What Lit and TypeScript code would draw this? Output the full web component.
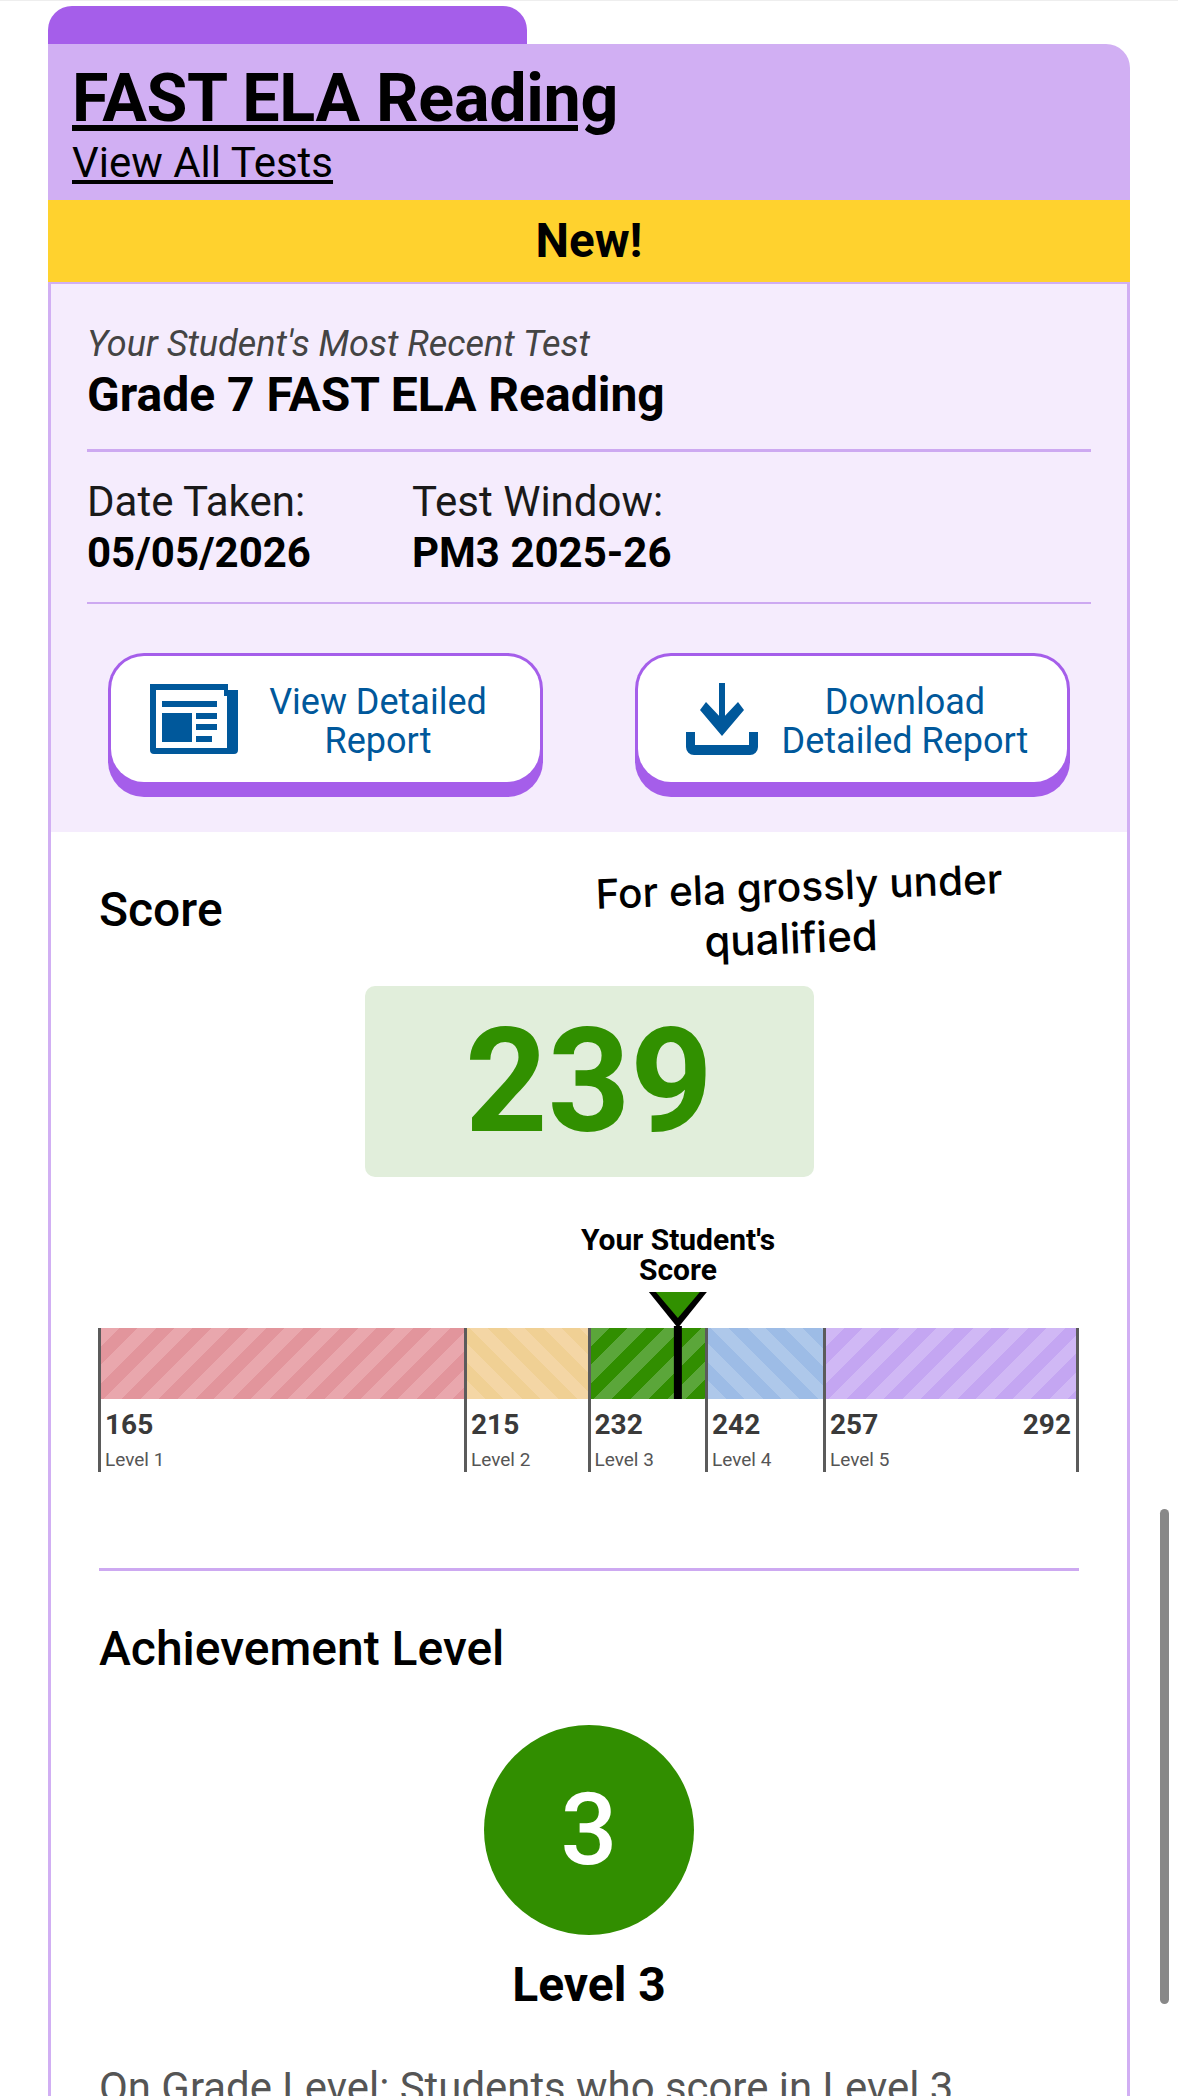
import { LitElement, html, css } from "lit";
import { customElement } from "lit/decorators.js";

const LEVELS = [
  { n: "165", l: "Level 1", w: 366, c: "red" },
  { n: "215", l: "Level 2", w: 123.5, c: "orange" },
  { n: "232", l: "Level 3", w: 117.5, c: "green" },
  { n: "242", l: "Level 4", w: 118, c: "blue" },
  { n: "257", l: "Level 5", w: 256, c: "purple" },
];

@customElement("app-root")
export class AppRoot extends LitElement {
  static styles = css`
    :host { display: block; position: relative; height: 2096px; overflow: hidden; background: #fff; font-family: Roboto, sans-serif; color: #000; box-sizing: border-box; padding: 5px 48px 0; border-top: 1px solid #eee; }
    * { box-sizing: border-box; }
    .tab { width: 479px; height: 38px; background: #a55eea; border-radius: 24px 24px 0 0; }
    .header { height: 156px; background: #d1aff3; border-top-right-radius: 24px; padding: 18px 24px 0; }
    .title { font-size: 66.4px; line-height: 72px; font-weight: 700; text-decoration: underline; letter-spacing: -0.3px; }
    .all { font-size: 42px; line-height: 52px; text-decoration: underline; margin-top: 3px; }
    .new { height: 82px; background: #ffd22e; display: flex; align-items: center; justify-content: center; font-size: 47.5px; font-weight: 700; }
    .body { border: solid #d1aff3; border-width: 2px 3px 0; }
    .panel { background: #f5ecfd; padding: 39px 36px 35px; }
    .kicker { font-size: 36px; line-height: 42px; font-style: italic; color: #444; }
    .test { font-size: 48px; line-height: 50px; font-weight: 700; margin-top: 5px; }
    .rule { height: 2.5px; background: #cda9f1; }
    .panel .rule.a { margin-top: 29px; }
    .panel .rule.b { margin-top: 27px; }
    .dates { display: flex; margin-top: 28px; }
    .dates > div { width: 325px; }
    .lbl { font-size: 42px; line-height: 44px; color: #1a1a1a; }
    .val { font-size: 42px; line-height: 44px; font-weight: 700; margin-top: 7px; }
    .btns { display: flex; justify-content: space-between; margin-top: 49px; padding: 0 21px 0 21px; }
    .btn { width: 435px; height: 144px; background: #a55eea; border-radius: 36px; padding: 3px 3px 15px; }
    .btn-in { height: 100%; background: #fff; border-radius: 33px; display: flex; align-items: center; gap: 20px; padding-left: 39px; color: #00589b; font-size: 36px; line-height: 39.5px; text-align: center; }
    .btn-in svg { flex: none; }
    .btn-in.dl { padding-left: 48px; gap: 22px; }
    .btn-txt { flex: none; padding-top: 6px; }
    .btn-txt.v { width: 240px; }
    .btn-txt.d { width: 250px; }
    .main { padding: 53px 48px 0; }
    h2 { margin: 0; font-size: 48px; line-height: 50px; font-weight: 500; }
    .score { width: 449px; height: 191px; margin: 51px auto 0; background: #e1eedb; border-radius: 10px; display: flex; align-items: center; justify-content: center; color: #319000; font-size: 144px; font-weight: 700; line-height: 1; }
    .chart { position: relative; margin-top: 48px; padding-top: 103px; }
    .marker { position: absolute; z-index: 2; top: 0; transform: translateX(-50%); display: flex; flex-direction: column; align-items: center; height: 174px; white-space: nowrap; }
    .marker-t { font-size: 30px; line-height: 30px; font-weight: 700; text-align: center; }
    .marker svg { display: block; margin-top: 7px; }
    .cols { display: flex; margin-left: -1px; }
    .col { flex: none; border-left: 3px solid rgba(50,50,50,.8); height: 144px; }
    .col.last { border-right: 3px solid rgba(50,50,50,.8); }
    .bar { height: 71px; }
    .red { background: repeating-linear-gradient(135deg, #e9a7ad 0 13px, #e2959c 13px 26px); }
    .orange { background: repeating-linear-gradient(45deg, #f4d6a5 0 13px, #f0d094 13px 26px); }
    .green { background: repeating-linear-gradient(135deg, #5ba63a 0 13px, #318e00 13px 26px); }
    .blue { background: repeating-linear-gradient(45deg, #aec8ea 0 13px, #9dbce6 13px 26px); }
    .purple { background: repeating-linear-gradient(135deg, #d0b8f5 0 13px, #c4a6f2 13px 26px); }
    .col-b { display: flex; justify-content: space-between; padding: 11px 5px 0 4px; font-size: 28px; line-height: 30px; font-weight: 700; color: #3a3a3a; }
    .col-l { padding-left: 4px; margin-top: 9px; font-size: 19px; line-height: 22px; color: #555; }
    .main .rule { margin-top: 96px; }
    .ach { margin-top: 53px; }
    .circle { width: 210px; height: 210px; border-radius: 50%; margin: 51px auto 0; background: #318e00; color: #fff; display: flex; align-items: center; justify-content: center; font-size: 100px; font-weight: 500; line-height: 1; }
    .lv { margin-top: 25px; text-align: center; font-size: 48px; line-height: 50px; font-weight: 700; }
    .para { margin: 55px 0 0; font-size: 41.9px; line-height: 46px; color: #555; }
    .note { position: absolute; left: 560px; top: 860px; width: 480px; text-align: center; font-family: Inter, sans-serif; font-size: 40.5px; line-height: 51px; font-weight: 500; transform: rotate(-2.2deg); }
    .note-2 { display: block; transform: translateX(-10px); font-size: 42px; }
    .scroll { position: absolute; left: 1160px; top: 1508px; width: 9px; height: 495px; background: #888; border-radius: 5px; }
  `;

  render() {
    return html`
      <div class="tab"></div>
      <div class="header">
        <div class="title">FAST ELA Reading</div>
        <div class="all">View All Tests</div>
      </div>
      <div class="new">New!</div>
      <div class="body">
        <div class="panel">
          <div class="kicker">Your Student's Most Recent Test</div>
          <div class="test">Grade 7 FAST ELA Reading</div>
          <div class="rule a"></div>
          <div class="dates">
            <div><div class="lbl">Date Taken:</div><div class="val">05/05/2026</div></div>
            <div><div class="lbl">Test Window:</div><div class="val">PM3 2025-26</div></div>
          </div>
          <div class="rule b"></div>
          <div class="btns">
            <div class="btn"><div class="btn-in">
              <svg width="88" height="70" viewBox="0 0 88 70">
                <path fill="#00589b" d="M0 0H78V6H88V66a4 4 0 0 1-4 4H4a4 4 0 0 1-4-4Z"/>
                <rect x="6" y="6" width="68" height="58" fill="#fff"/>
                <rect x="74" y="12" width="3" height="52" fill="#fff"/>
                <g fill="#00589b">
                  <rect x="12" y="17" width="55" height="6"/>
                  <rect x="12" y="29" width="30" height="29"/>
                  <rect x="46" y="29" width="21" height="6"/>
                  <rect x="46" y="40" width="21" height="6"/>
                  <rect x="46" y="52" width="16" height="6"/>
                </g>
              </svg>
              <div class="btn-txt v">View Detailed<br />Report</div>
            </div></div>
            <div class="btn"><div class="btn-in dl">
              <svg width="72" height="72" viewBox="0 0 72 72">
                <rect x="33" y="0" width="6" height="42" fill="#00589b"/>
                <path fill="#00589b" d="M14 27 20 19 36 36 52 19 58 27 36 53Z"/>
                <path fill="#00589b" d="M0 49H9V62H63V49H72V64a8 8 0 0 1-8 8H8a8 8 0 0 1-8-8Z"/>
              </svg>
              <div class="btn-txt d">Download<br />Detailed Report</div>
            </div></div>
          </div>
        </div>
        <div class="main">
          <h2>Score</h2>
          <div class="score">239</div>
          <div class="chart">
            <div class="marker" style="left:${((678 - 99) / 980) * 100}%">
              <div class="marker-t">Your Student's<br />Score</div>
              <svg width="60" height="107" viewBox="0 0 60 107">
                <path d="M1 0H59L30 36Z" fill="#000"/>
                <path d="M8 0H52L30 26Z" fill="#319000"/>
                <rect x="26" y="34" width="8" height="73" fill="#000"/>
              </svg>
            </div>
            <div class="cols">
              ${LEVELS.map(
                (v, i) => html`
                  <div class="col ${i === 4 ? "last" : ""}" style="width:${v.w}px">
                    <div class="bar ${v.c}"></div>
                    <div class="col-b"><span>${v.n}</span>${i === 4 ? html`<span>292</span>` : ""}</div>
                    <div class="col-l">${v.l}</div>
                  </div>
                `
              )}
            </div>
          </div>
          <div class="rule"></div>
          <h2 class="ach">Achievement Level</h2>
          <div class="circle">3</div>
          <div class="lv">Level 3</div>
          <p class="para">On Grade Level: Students who score in Level 3</p>
        </div>
      </div>
      <div class="note">For ela grossly under<br /><span class="note-2">qualified</span></div>
      <div class="scroll"></div>
    `;
  }
}
